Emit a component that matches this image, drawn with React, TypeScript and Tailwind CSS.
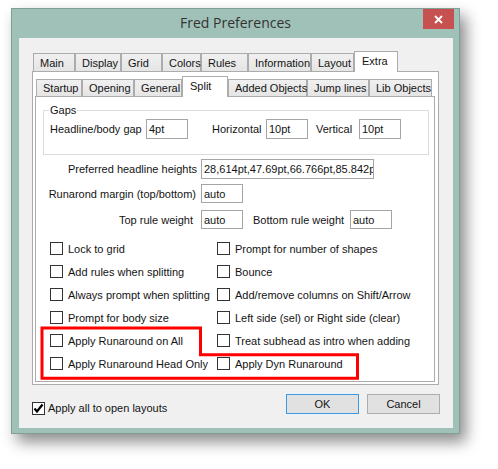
import React from "react";

type Tab = { label: string; w: number; selected?: boolean };

const row1: Tab[] = [
  { label: "Main", w: 42 },
  { label: "Display", w: 46 },
  { label: "Grid", w: 41 },
  { label: "Colors", w: 39 },
  { label: "Rules", w: 47 },
  { label: "Information", w: 63 },
  { label: "Layout", w: 43 },
  { label: "Extra", w: 44, selected: true },
];

const row2: Tab[] = [
  { label: "Startup", w: 46 },
  { label: "Opening", w: 52 },
  { label: "General", w: 48 },
  { label: "Split", w: 46, selected: true },
  { label: "Added Objects", w: 79 },
  { label: "Jump lines", w: 62 },
  { label: "Lib Objects", w: 63 },
];

function TabStrip({ tabs, small }: { tabs: Tab[]; small?: boolean }) {
  return (
    <div className="flex items-end h-[20px] pl-[1px]">
      {tabs.map((t) => (
        <div
          key={t.label}
          style={{ width: t.w }}
          className={
            t.selected
              ? "relative z-10 h-[21px] -mb-px border border-b-0 border-[#acacac] bg-white pl-[7px] pb-[2px] flex items-center whitespace-nowrap"
              : small
              ? "h-[17px] border border-b-0 border-[#acacac] bg-[linear-gradient(#f0f0f0,#e5e5e5)] pl-[6px] flex items-center whitespace-nowrap"
              : "h-[18px] border border-b-0 border-[#acacac] bg-[linear-gradient(#f0f0f0,#e5e5e5)] pl-[6px] flex items-center whitespace-nowrap"
          }
        >
          {t.label}
        </div>
      ))}
    </div>
  );
}

function Box({ checked }: { checked?: boolean }) {
  return (
    <div className="w-[13px] h-[13px] shrink-0 border border-[#333333] bg-white flex items-center justify-center">
      {checked && (
        <svg width="11" height="11" viewBox="0 0 11 11">
          <path d="M1.5 5.5 L4 8.5 L9.5 1.5" fill="none" stroke="#000" strokeWidth="2.2" />
        </svg>
      )}
    </div>
  );
}

function Check({ label }: { label: string }) {
  return (
    <div className="h-[23px] flex items-center whitespace-nowrap">
      <Box />
      <span className="ml-[5px]">{label}</span>
    </div>
  );
}

function Field({ text, w, h = 20 }: { text: string; w: number; h?: number }) {
  return (
    <div
      style={{ width: w, height: h }}
      className="shrink-0 border border-[#a5a5a5] bg-white px-[2px] flex items-center overflow-hidden whitespace-nowrap"
    >
      {text}
    </div>
  );
}

export default function App() {
  const left = [
    "Lock to grid",
    "Add rules when splitting",
    "Always prompt when splitting",
    "Prompt for body size",
    "Apply Runaround on All",
    "Apply Runaround Head Only",
  ];
  const right = [
    "Prompt for number of shapes",
    "Bounce",
    "Add/remove columns on Shift/Arrow",
    "Left side (sel) or Right side (clear)",
    "Treat subhead as intro when adding",
    "Apply Dyn Runaround",
  ];
  return (
    <div className="relative w-[498px] h-[469px] bg-white overflow-hidden pt-[8px] pl-[11px] font-['Liberation_Sans',Arial,sans-serif] text-[11px] leading-[14px] text-[#141414]">
      <div className="w-[449px] h-[426px] bg-[#a0c1b8] border border-[#7e9e96] shadow-[6px_8px_14px_rgba(0,0,0,0.45)] flex flex-col">
        {/* title bar */}
        <div className="h-[29px] grid grid-cols-[1fr_auto_1fr]">
          <div />
          <div className="pt-[4px] text-[14px] leading-[20px] text-[#333333] font-['Open_Sans',sans-serif] whitespace-nowrap">
            Fred Preferences
          </div>
          <div className="flex justify-end pr-[5px]">
            <div className="w-[31px] h-[20px] bg-[#c75050] flex items-center justify-center">
              <svg width="9" height="9" viewBox="0 0 9 9">
                <path d="M1 1 L8 8 M8 1 L1 8" stroke="#fff" strokeWidth="1.8" />
              </svg>
            </div>
          </div>
        </div>
        {/* client */}
        <div className="ml-[7px] w-[434px] h-[390px] bg-[#f0f0f0] pl-[13px] pt-[13px] flex flex-col">
          <TabStrip tabs={row1} />
          <div className="w-[407px] h-[314px] border border-[#acacac] bg-white pl-[2px] pt-[4px]">
            <TabStrip tabs={row2} small />
            <div className="w-[400px] h-[286px] border border-[#acacac] bg-white flex flex-col">
              {/* Gaps group */}
              <div className="relative ml-[7px] mt-[13px] w-[386px] h-[45px] border border-[#dcdcdc] pt-[8px] pl-[6px]">
                <div className="absolute left-[5px] top-[-8px] bg-white px-[1px]">Gaps</div>
                <div className="flex items-center h-[20px] whitespace-nowrap">
                  <div className="w-[96px]">Headline/body gap</div>
                  <Field text="4pt" w={42} />
                  <div className="ml-[24px] w-[54px]">Horizontal</div>
                  <Field text="10pt" w={42} />
                  <div className="ml-[8px] w-[43px]">Vertical</div>
                  <Field text="10pt" w={42} />
                </div>
              </div>
              <div className="mt-[4px] flex items-center whitespace-nowrap">
                <div className="w-[165px] text-right pr-[4px]">Preferred headline heights</div>
                <Field text="28,614pt,47.69pt,66.766pt,85.842p" w={173} />
              </div>
              <div className="mt-[5px] flex items-center whitespace-nowrap">
                <div className="w-[165px] text-right pr-[5px]">Runarond margin (top/bottom)</div>
                <Field text="auto" w={42} h={19} />
              </div>
              <div className="mt-[7px] flex items-center whitespace-nowrap">
                <div className="w-[165px] text-right pr-[8px]">Top rule weight</div>
                <Field text="auto" w={42} h={19} />
                <div className="ml-[10px] w-[97px]">Bottom rule weight</div>
                <Field text="auto" w={42} h={19} />
              </div>
              <div className="mt-[8px] pl-[14px] grid grid-cols-[167px_1fr]">
                {left.map((l, i) => (
                  <React.Fragment key={l}>
                    <Check label={l} />
                    <Check label={right[i]} />
                  </React.Fragment>
                ))}
              </div>
            </div>
          </div>
          {/* bottom row */}
          <div className="mt-[9px] w-[408px] flex items-start">
            <div className="mt-[7px] flex items-center whitespace-nowrap">
              <Box checked />
              <span className="ml-[3px]">Apply all to open layouts</span>
            </div>
            <div className="ml-auto flex gap-[8px]">
              <div className="w-[73px] h-[20px] border border-[#3c9be6] bg-[#e1e1e1] flex items-center justify-center">
                OK
              </div>
              <div className="w-[73px] h-[20px] border border-[#adadad] bg-[#e1e1e1] flex items-center justify-center">
                Cancel
              </div>
            </div>
          </div>
        </div>
      </div>
      {/* red annotation */}
      <svg className="absolute left-0 top-0 pointer-events-none" width="498" height="469">
        <path
          d="M42 328 H200.5 V354.7 H357.5 V378.3 H42 Z"
          fill="none"
          stroke="#ff0000"
          strokeWidth="3"
          strokeLinejoin="miter"
        />
      </svg>
    </div>
  );
}
